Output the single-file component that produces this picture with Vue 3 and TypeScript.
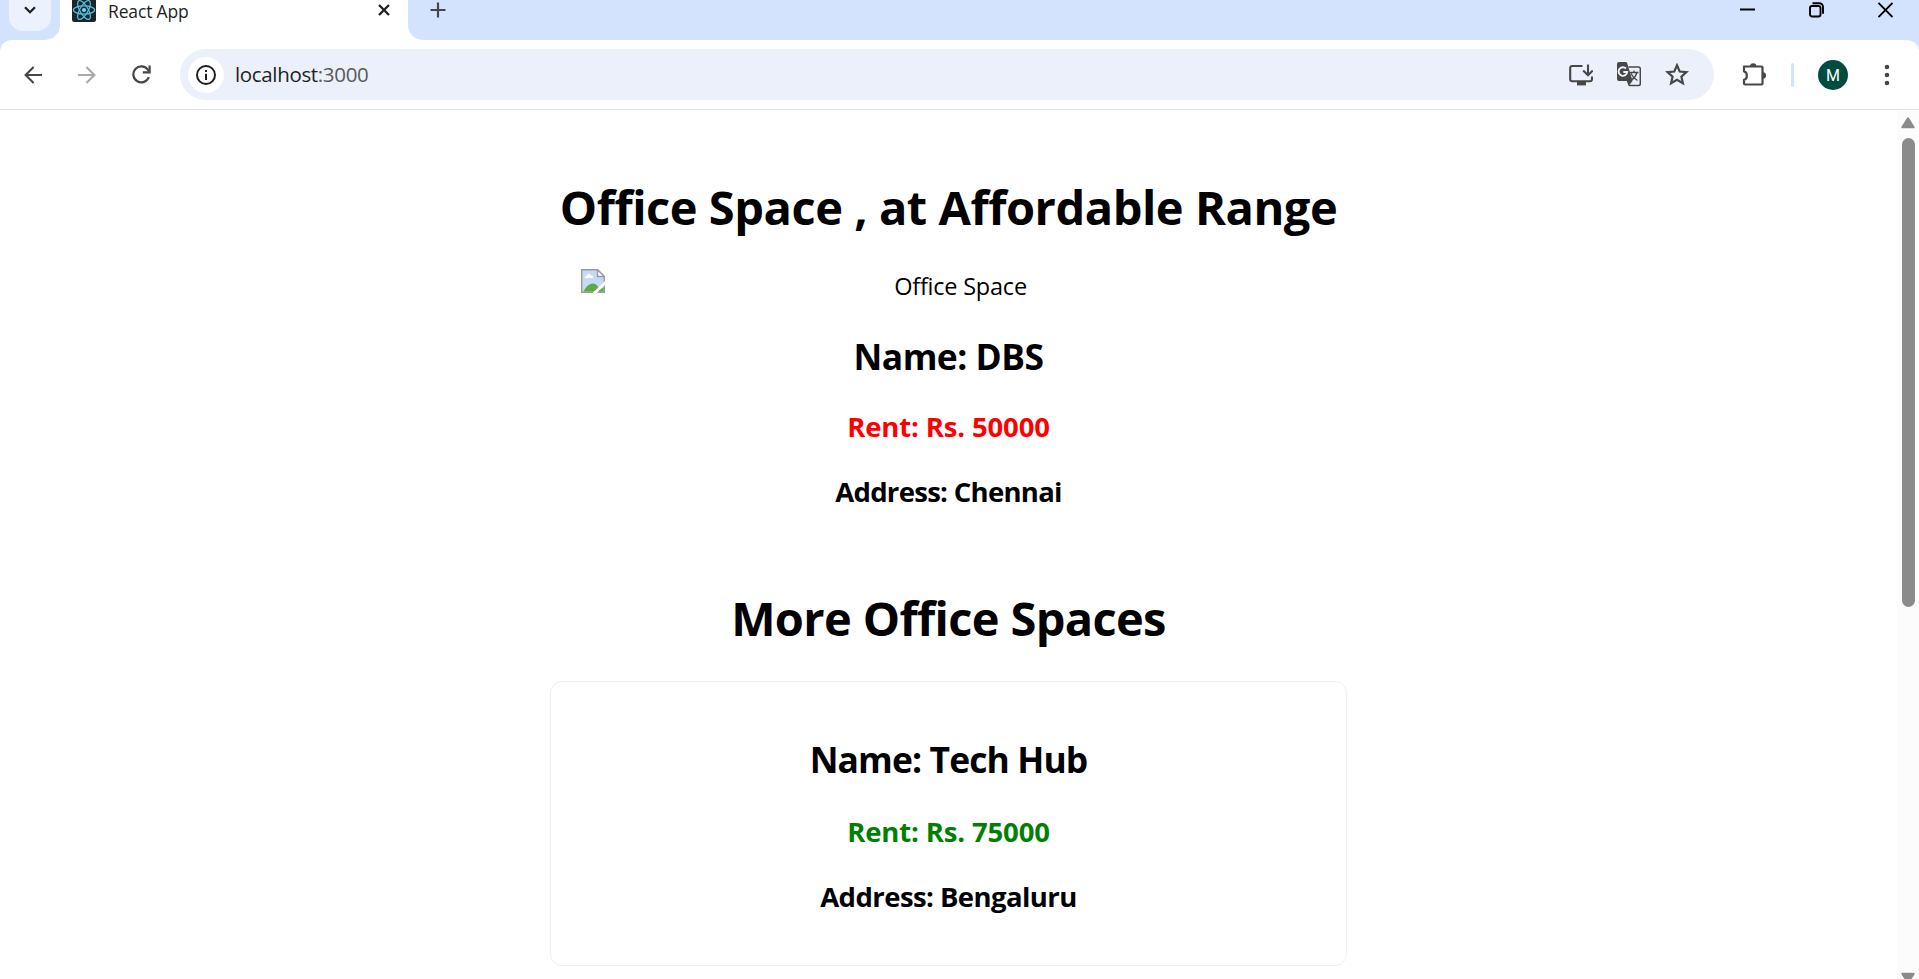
<script setup lang="ts">
interface Office {
  id: string
  name: string
  rent: number
  address: string
}

const featured: Office = { id: 'dbs', name: 'DBS', rent: 50000, address: 'Chennai' }
const offices: Office[] = [{ id: 'tech-hub', name: 'Tech Hub', rent: 75000, address: 'Bengaluru' }]

const rentClass = (rent: number): string => (rent > 60000 ? 'rent-high' : 'rent-low')
</script>

<template>
  <div class="window">
    <div class="tab-strip">
      <div class="strip-left">
        <div class="tab-search">
          <svg width="12" height="8" viewBox="0 0 12 8"><path d="M1 1.2 6 6.2 11 1.2" fill="none" stroke="#1f1f1f" stroke-width="2.3" /></svg>
        </div>
      </div>
      <div class="tab">
        <svg class="favicon" width="24" height="24" viewBox="0 0 24 24">
          <rect width="24" height="24" rx="2.5" fill="#20232a" />
          <g fill="none" stroke="#53c1de" stroke-width="1.25">
            <ellipse cx="12" cy="12" rx="10.6" ry="4.1" />
            <ellipse cx="12" cy="12" rx="10.6" ry="4.1" transform="rotate(60 12 12)" />
            <ellipse cx="12" cy="12" rx="10.6" ry="4.1" transform="rotate(120 12 12)" />
          </g>
          <circle cx="12" cy="12" r="2.1" fill="#61dafb" />
        </svg>
        <span class="tab-title">React App</span>
        <svg class="tab-close" width="12" height="12" viewBox="0 0 12 12"><path d="M1 1 11 11M11 1 1 11" stroke="#1f1f1f" stroke-width="2.3" /></svg>
      </div>
      <div class="strip-right">
        <svg class="new-tab" width="16" height="16" viewBox="0 0 16 16"><path d="M8 .5V15.500M.5 8H15.500" stroke="#474747" stroke-width="2.2" /></svg>
        <div class="window-buttons">
          <svg width="15" height="16" viewBox="0 0 15 16"><path d="M0 7.500H15" stroke="#000" stroke-width="2" /></svg>
          <svg width="15" height="16" viewBox="0 0 15 16" fill="none" stroke="#000" stroke-width="1.9">
            <rect x="1" y="4" width="10.500" height="10.500" rx="2" />
            <path d="M3.500 1.200H10.300A3.700 3.700 0 0 1 14 4.900V11.800" />
          </svg>
          <svg width="15" height="16" viewBox="0 0 15 16"><path d="M.5 1 14.500 15M14.500 1 .5 15" stroke="#000" stroke-width="1.8" /></svg>
        </div>
      </div>
    </div>

    <div class="toolbar-back">
      <div class="toolbar">
        <svg class="back" width="18" height="18" viewBox="0 0 18 18" fill="none" stroke="#474747" stroke-width="2.1"><path d="M18 9H1.800M9.600 1 1.600 9 9.600 17" /></svg>
        <svg class="forward" width="18" height="18" viewBox="0 0 18 18" fill="none" stroke="#a9a9a9" stroke-width="2.1"><path d="M0 9H16.200M8.400 1 16.400 9 8.400 17" /></svg>
        <svg class="reload" width="19" height="19" viewBox="0 0 19 19" fill="none" stroke="#474747" stroke-width="2.2">
          <path d="M16.900 12A8 8 0 1 1 15.800 4.600L17.500 6.800" />
          <path d="M17.600 .5V7.300H10.800" />
        </svg>
        <div class="address-bar">
          <div class="site-info">
            <svg width="20" height="20" viewBox="0 0 20 20">
              <circle cx="10" cy="10" r="9" fill="none" stroke="#1f1f1f" stroke-width="2" />
              <path d="M10 8.800V15M10 5V7.100" stroke="#1f1f1f" stroke-width="2" />
            </svg>
          </div>
          <span class="url">localhost<span class="port">:3000</span></span>
          <div class="address-actions">
            <svg width="24" height="22" viewBox="0 0 24 22" fill="none" stroke="#474747" stroke-width="2.100">
              <path d="M13.500 2H3.200Q1.200 2 1.200 4V15.200Q1.200 17.200 3.200 17.200H21Q23 17.200 23 15.200V12.500" />
              <path d="M19 .6V10.800M14.200 6.500 19 11.300 23.800 6.500" />
              <path d="M8 19.500H17" stroke-width="3.800" />
            </svg>
            <svg width="24" height="25" viewBox="0 0 24 25">
              <path d="M2 0H8.600Q9.800 0 10.200 1.200L15.600 19 11.500 24 9.800 19H2Q0 19 0 17V2Q0 0 2 0Z" fill="#474747" />
              <path d="M9 6.500A4.300 4.300 0 1 0 10.200 10H6.300" fill="none" stroke="#ebf0fa" stroke-width="1.900" />
              <path d="M11.500 5H21.500Q23.300 5 23.300 6.800V21.800Q23.300 23.600 21.500 23.600H12" fill="none" stroke="#474747" stroke-width="1.500" />
              <path d="M12 10.500H21.500M17 8.500V10.500M20 10.500Q18.500 15.500 14.500 18M14 11.500Q16 16 20.500 18.500" fill="none" stroke="#474747" stroke-width="1.300" />
            </svg>
            <svg width="24" height="23" viewBox="0 0 24 23"><path d="M12 2.300 14.700 8.500 21.500 9.100 16.400 13.600 17.900 20.200 12 16.700 6.100 20.200 7.600 13.600 2.500 9.100 9.300 8.500Z" fill="none" stroke="#474747" stroke-width="2.200" /></svg>
          </div>
        </div>
        <svg class="extensions" width="25" height="25" viewBox="0 0 25 25">
          <path d="M2 4.500H19.500Q20.500 4.500 20.500 5.500V21.500Q20.500 22.500 19.500 22.500H3Q2 22.500 2 21.500V17.800C5.800 17.200 5.800 10 2 9.500Z" fill="none" stroke="#474747" stroke-width="2.200" stroke-linejoin="round" />
          <path d="M8 4.500A3.200 3.200 0 0 1 14.400 4.500ZM20.800 10.300A3.200 3.200 0 0 1 20.800 16.700Z" fill="#474747" />
        </svg>
        <span class="divider"></span>
        <span class="avatar">M</span>
        <svg class="menu" width="6" height="22" viewBox="0 0 6 22" fill="#474747"><circle cx="3" cy="3" r="2.300" /><circle cx="3" cy="11" r="2.300" /><circle cx="3" cy="19" r="2.300" /></svg>
      </div>
    </div>

    <div class="viewport">
      <main class="page">
        <h1 class="hero">Office Space , at Affordable Range</h1>
        <div class="missing-image">
          <svg width="24" height="24" viewBox="0 0 24 24">
            <path d="M.7 .7H16.500L23.300 7.500V23.300H.7Z" fill="#c6d9f7" stroke="#9a9a9a" stroke-width="1.400" />
            <path d="M3.500 9Q4 6.500 6 6.500 7.500 3.500 9.500 6 12 6.200 12.300 9Z" fill="#fff" />
            <path d="M2.500 22.600Q6.500 14.500 12 14.500 16.500 14.500 19.500 22.600Z" fill="#5aac3c" />
            <path d="M16.500 .7V7.500H23.300Z" fill="#fff" stroke="#9a9a9a" stroke-width="1.400" />
            <path d="M11.500 24 24 12V16L16 24Z" fill="#fff" />
            <path d="M17 22.600 22.600 18V22.600Z" fill="#5aac3c" />
          </svg>
          <span class="alt">Office Space</span>
        </div>
        <h2 class="name dbs">Name: {{ featured.name }}</h2>
        <h3 class="rent" :class="rentClass(featured.rent)">Rent: Rs. {{ featured.rent }}</h3>
        <h3 class="address chennai">Address: {{ featured.address }}</h3>

        <h1 class="more">More Office Spaces</h1>
        <section v-for="office in offices" :key="office.id" class="card">
          <h2 class="name">Name: {{ office.name }}</h2>
          <h3 class="rent" :class="rentClass(office.rent)">Rent: Rs. {{ office.rent }}</h3>
          <h3 class="address">Address: {{ office.address }}</h3>
        </section>
      </main>
      <div class="scrollbar">
        <svg width="14" height="12" viewBox="0 0 14 12"><path d="M7 1.300 12.700 10.200H1.300Z" fill="#8b8b8b" stroke="#8b8b8b" stroke-width="2" stroke-linejoin="round" /></svg>
        <div class="thumb"></div>
        <svg class="down" width="14" height="12" viewBox="0 0 14 12"><path d="M7 10.700 12.700 1.800H1.300Z" fill="#8b8b8b" stroke="#8b8b8b" stroke-width="2" stroke-linejoin="round" /></svg>
      </div>
    </div>
  </div>
</template>

<style>
html,
body {
  overflow: hidden;
}
</style>

<style scoped>
.window {
  display: flex;
  flex-direction: column;
  width: 100%;
  height: 979px;
  overflow: hidden;
  background: #fff;
  color: #000;
  font-family: "Segoe UI", "Open Sans", "Noto Sans", sans-serif;
}
svg {
  display: block;
  flex: none;
}
.tab-strip {
  display: flex;
  flex: none;
  height: 40px;
}
.strip-left {
  width: 60px;
  background: #d3e3fd;
  border-bottom-right-radius: 15px;
}
.tab-search {
  display: flex;
  justify-content: center;
  width: 42px;
  height: 31px;
  margin-left: 9px;
  padding-top: 6px;
  box-sizing: border-box;
  background: #ebf1fd;
  border-radius: 0 0 14px 14px;
}
.tab {
  display: flex;
  width: 348px;
  box-sizing: border-box;
  padding-left: 12px;
}
.favicon {
  margin-top: -2px;
}
.tab-title {
  flex: 1;
  margin-left: 12px;
  font-size: 17.5px;
  line-height: 22px;
  letter-spacing: -0.15px;
  color: #1f1f1f;
}
.tab-close {
  margin: 4px 18px 0 0;
}
.strip-right {
  display: flex;
  flex: 1;
  justify-content: space-between;
  background: #d3e3fd;
  border-bottom-left-radius: 15px;
}
.new-tab {
  margin: 2px 0 0 22px;
}
.window-buttons {
  display: flex;
  gap: 54px;
  margin: 1.5px 26px 0 0;
}
.toolbar-back {
  flex: none;
  background: #d3e3fd;
}
.toolbar {
  display: flex;
  align-items: center;
  height: 70px;
  box-sizing: border-box;
  background: #fff;
  border-bottom: 1px solid #dfe1e2;
  border-radius: 12px 12px 0 0;
}
.back {
  margin-left: 24px;
}
.forward {
  margin-left: 36px;
}
.reload {
  margin-left: 36px;
}
.address-bar {
  display: flex;
  flex: 1;
  align-items: center;
  height: 51px;
  margin-left: 29px;
  box-sizing: border-box;
  padding: 0 25px 0 8px;
  background: #ebf0fa;
  border-radius: 26px;
}
.site-info {
  display: flex;
  align-items: center;
  justify-content: center;
  width: 36px;
  height: 36px;
  background: #fff;
  border-radius: 50%;
}
.url {
  margin-left: 11px;
  padding-bottom: 2px;
  font-size: 20.5px;
  line-height: 30px;
  letter-spacing: -0.34px;
  color: #1f1f1f;
}
.port {
  color: #575b5f;
}
.address-actions {
  display: flex;
  align-items: center;
  gap: 24px;
  margin-left: auto;
}
.extensions {
  margin: 0 24px 0 28px;
}
.divider {
  width: 3px;
  height: 24px;
  background: #d3e3fd;
  border-radius: 2px;
}
.avatar {
  width: 30px;
  height: 30px;
  margin-left: 24px;
  border-radius: 50%;
  background: #004d40;
  color: #fff;
  font: 400 16px/31px Roboto, sans-serif;
  text-align: center;
}
.menu {
  margin: 0 29px 0 36px;
}
.viewport {
  display: flex;
  flex: 1;
  min-height: 0;
}
.page {
  flex: 1;
  padding-top: 65px;
  overflow: hidden;
  text-align: center;
}
h1,
h2,
h3 {
  margin: 0;
  font-weight: 700;
  white-space: nowrap;
}
h1 {
  font-size: 47px;
  line-height: 64px;
}
.hero {
  letter-spacing: -0.46px;
}
.missing-image {
  display: flex;
  width: 736px;
  height: 32px;
  margin: 30px auto 0;
}
.alt {
  flex: 1;
  font-size: 23.5px;
  line-height: 34px;
  letter-spacing: -0.22px;
}
.name {
  font-size: 35.4px;
  line-height: 48px;
  letter-spacing: -0.88px;
}
.name.dbs {
  margin-top: 31px;
  letter-spacing: -0.51px;
}
h3 {
  font-size: 27.5px;
  line-height: 36px;
}
.rent {
  margin-top: 29px;
  letter-spacing: -0.15px;
}
.rent-low {
  color: #f00;
}
.rent-high {
  color: #008000;
}
.address {
  margin-top: 29px;
  letter-spacing: -0.57px;
}
.address.chennai {
  letter-spacing: -0.7px;
}
.more {
  margin-top: 76px;
  letter-spacing: -0.65px;
}
.card {
  width: 797px;
  height: 285px;
  margin: 31px auto 0;
  padding-top: 53px;
  box-sizing: border-box;
  border: 1px solid #eee;
  border-radius: 12px;
}
.card .rent {
  margin-top: 31px;
}
.scrollbar {
  display: flex;
  flex-direction: column;
  align-items: center;
  width: 22px;
  padding: 7px 0 0;
  box-sizing: border-box;
  background: #fcfcfc;
}
.thumb {
  flex: none;
  width: 13px;
  height: 469px;
  margin-top: 9px;
  border-radius: 7px;
  background: #8b8b8b;
}
.down {
  margin: auto 0 -5px;
}
</style>
